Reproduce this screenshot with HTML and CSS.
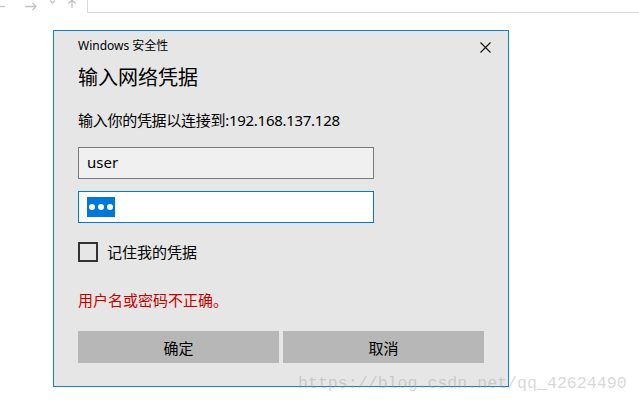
FILE: index.html
```html
<!DOCTYPE html>
<html>
    <head>
        <meta name="viewport" content="width=device-width"/>
        <title>Windows 安全性</title>
        <link rel="stylesheet" href="styles.css">
    </head>
    <body>
        <div class="topbar">
            <svg class="nav" width="87" height="12" viewBox="0 0 87 12">
                <g fill="none" stroke="#c4c4c4" stroke-width="1.3">
                    <path d="M0 6.5H5"/>
                    <path d="M25 6.5H36M32.5 3L36 6.5L32.5 10"/>
                    <path d="M50 0.5L52.5 3L55 0.5"/>
                    <path d="M72 0V8M68.5 3.5L72 0L75.5 3.5"/>
                </g>
            </svg>
            <div class="address"></div>
        </div>

        <div class="dialog">
            <div class="caption">
                <span>Windows 安全性</span>
                <svg class="close" width="11" height="11" viewBox="0 0 11 11">
                    <path d="M0.5 0.5L10.5 10.5M10.5 0.5L0.5 10.5" stroke="#111" stroke-width="1.1" fill="none"/>
                </svg>
            </div>
            <h1 class="title">输入网络凭据</h1>
            <p class="prompt">输入你的凭据以连接到:192.168.137.128</p>
            <div class="field">user</div>
            <div class="field active">
                <span class="sel"><i></i><i></i><i></i></span>
            </div>
            <label class="remember"><span class="box"></span>记住我的凭据</label>
            <p class="error">用户名或密码不正确。</p>
            <div class="buttons">
                <button class="btn">确定</button>
                <button class="btn">取消</button>
            </div>
        </div>

        <div class="watermark">https://blog.csdn.net/qq_42624490</div>
    </body>
</html>
```

FILE: styles.css
```css
body {
    margin: 0;
    background: #fff;
    font-family: "Noto Sans", "Noto Sans CJK SC", sans-serif;
    color: #000;
}
.topbar {
    display: flex;
    height: 13px;
}
.topbar .nav {
    display: block;
    flex: none;
}
.topbar .address {
    flex: 1;
    height: 12px;
    border-left: 1px solid #d9d9d9;
    border-bottom: 1px solid #d9d9d9;
}

.dialog {
    box-sizing: border-box;
    width: 456px;
    height: 357px;
    margin: 17px 0 0 53px;
    padding: 0 24px;
    background: #e6e6e6;
    border: 1px solid #1a7fd4;
}
.caption {
    display: flex;
    align-items: center;
    justify-content: space-between;
    margin-top: 7px;
    height: 16px;
    font-size: 12px;
    line-height: 16px;
}
.caption .close {
    display: block;
    margin-right: -7px;
    margin-top: 2px;
}
.title {
    margin: 10px 0 0;
    font-size: 20px;
    font-weight: normal;
    line-height: 28px;
}
.prompt {
    margin: 18px 0 0;
    font-size: 15px;
    line-height: 20px;
    letter-spacing: -0.28px;
}
.field {
    box-sizing: border-box;
    width: 296px;
    height: 32px;
    margin-top: 17px;
    padding: 0 8px;
    background: #f0f0f0;
    border: 1px solid #7a7a7a;
    font-size: 15px;
    line-height: 29px;
}
.field.active {
    margin-top: 12px;
    background: #fff;
    border-color: #0078d7;
    display: flex;
    align-items: center;
}
.sel {
    display: flex;
    align-items: center;
    justify-content: center;
    gap: 3px;
    width: 28px;
    height: 20px;
    background: #0078d7;
}
.sel i {
    width: 6px;
    height: 6px;
    border-radius: 50%;
    background: #fff;
}
.remember {
    display: flex;
    align-items: center;
    gap: 9px;
    margin-top: 19px;
    height: 20px;
    font-size: 15px;
    line-height: 20px;
}
.remember .box {
    box-sizing: border-box;
    width: 20px;
    height: 20px;
    border: 2px solid #333;
}
.error {
    margin: 28px 0 0;
    color: #c80000;
    font-size: 15px;
    line-height: 20px;
}
.buttons {
    display: flex;
    gap: 4px;
    margin-top: 21px;
}
.btn {
    width: 201px;
    height: 32px;
    padding: 0;
    border: 0;
    background: #b7b7b7;
    font-family: inherit;
    font-size: 15px;
    color: #000;
}

.watermark {
    position: absolute;
    left: 298px;
    top: 373px;
    font-family: "Liberation Mono", monospace;
    font-size: 16.6px;
    line-height: 22px;
    color: rgba(150, 150, 150, 0.38);
}
```
